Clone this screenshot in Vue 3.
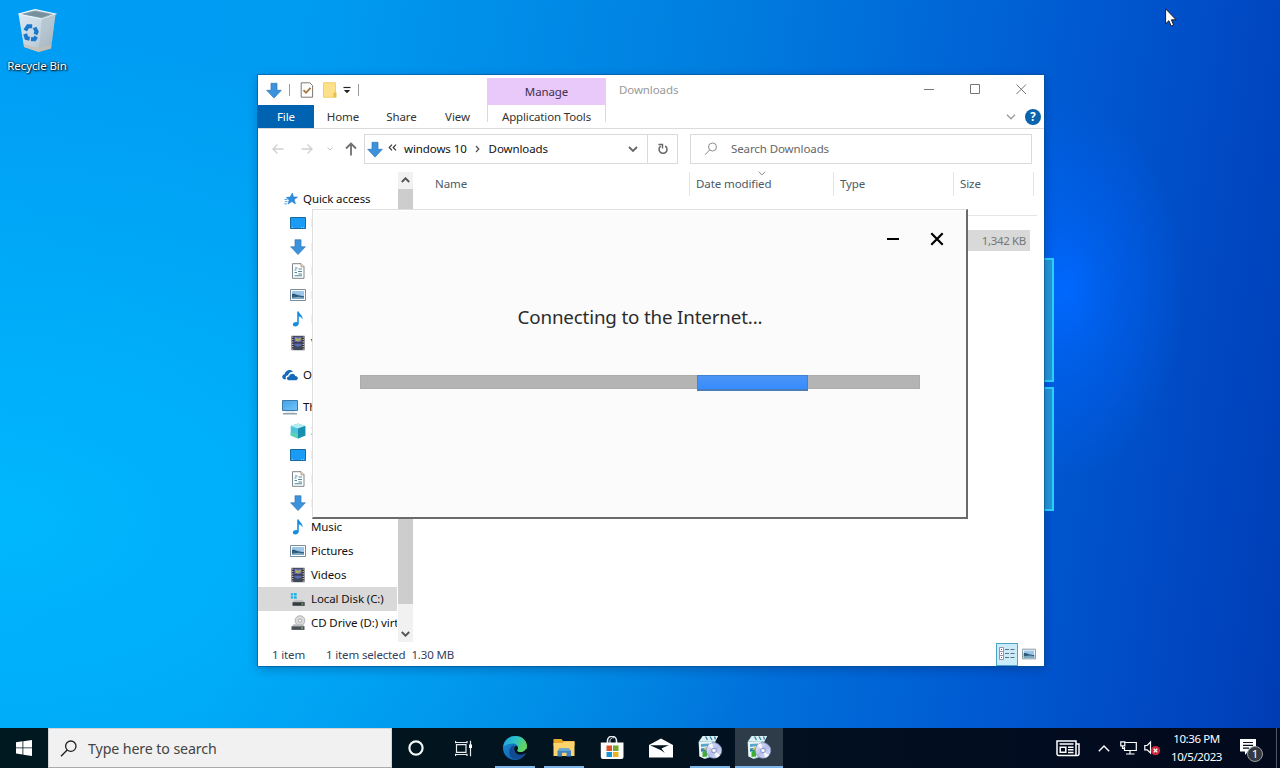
<template>
  <div class="desktop">
    <!-- icon sprites -->
    <svg class="sprites" aria-hidden="true">
      <defs>
        <linearGradient id="gEdge" x1="0" y1="0" x2="1" y2="1">
          <stop offset="0" stop-color="#1b8fd9" />
          <stop offset="1" stop-color="#0c55a8" />
        </linearGradient>
        <linearGradient id="gEdgeTop" x1="0" y1="0" x2="1" y2="0.4">
          <stop offset="0" stop-color="#1ba0e2" />
          <stop offset="0.55" stop-color="#2fc2c6" />
          <stop offset="1" stop-color="#62d65a" />
        </linearGradient>
        <linearGradient id="gBin" x1="0" y1="0" x2="1" y2="1">
          <stop offset="0" stop-color="#dcebf5" />
          <stop offset="0.6" stop-color="#c3d3dd" />
          <stop offset="1" stop-color="#9cabb5" />
        </linearGradient>
        <linearGradient id="gScreen" x1="0" y1="0" x2="1" y2="1">
          <stop offset="0" stop-color="#41a3e8" />
          <stop offset="1" stop-color="#74c3f8" />
        </linearGradient>
        <linearGradient id="gDisc" x1="0" y1="0" x2="1" y2="1">
          <stop offset="0" stop-color="#f4f6ff" />
          <stop offset="0.5" stop-color="#b4bcea" />
          <stop offset="1" stop-color="#e6eafa" />
        </linearGradient>
      </defs>
      <symbol id="i-down" viewBox="0 0 16 16">
        <path d="M5 .8h6v7h4.3L8 15.6.7 7.8H5z" fill="#3c93dc" stroke="#2b75b9" stroke-width=".7" />
      </symbol>
      <symbol id="i-star" viewBox="0 0 16 16">
        <path d="M9.500 1.200l1.300 4.400 4.700.2-3.800 2.900 1.300 4.900L9 10.900l-4.500 2.900 1.500-4.800L2.600 6.200l4.500-.4z" fill="#2e8ede" stroke="#1671c0" stroke-width=".6" />
        <path d="M.5 8.500h3.500M1 11h3M.3 13.500h3" stroke="#4ba4ea" stroke-width="1.100" />
      </symbol>
      <symbol id="i-desktop" viewBox="0 0 16 16">
        <path d="M.5 2.500h15v11H.5z" fill="#1a9bf5" stroke="#17699f" />
        <path d="M2 12.400h1M11 12.400h1M13 12.400h1" stroke="#b8e2fc" stroke-width=".8" />
      </symbol>
      <symbol id="i-doc" viewBox="0 0 16 16">
        <path d="M2.500.7h8.600L14 3.600v11.700H2.500z" fill="#fff" stroke="#7d868c" />
        <path d="M11 .8v3h3" fill="#eee" stroke="#b07f52" stroke-width=".8" />
        <path d="M5 5h2.500M8.500 6h3.500M4.500 7h2M8 8.500h4M4.500 9.500h2.500M8.500 11h3.500M4.500 12.800h7.500" stroke="#4a8c9c" stroke-width="1.100" />
      </symbol>
      <symbol id="i-pic" viewBox="0 0 16 16">
        <path d="M.5 2.500h15v11H.5z" fill="#fff" stroke="#7a8b99" />
        <path d="M2 4h12v8H2z" fill="#9cc6ea" />
        <path d="M2 7c3-.8 5 1.800 12 2.200V12H2z" fill="#315b78" />
        <path d="M2 10.600l7-.8 5 .8V12H2z" fill="#7cabc4" />
      </symbol>
      <symbol id="i-music" viewBox="0 0 16 16">
        <path d="M7.200.5h1.600c.3 2.500 4.500 3.800 3.700 8.300-.4-1.900-1.800-3-3.700-3.300v7.100c0 1.700-1.600 2.900-3.400 2.900-1.500 0-2.600-.8-2.600-2 0-1.600 2.300-2.800 4.400-2.300z" fill="#158fdc" />
      </symbol>
      <symbol id="i-video" viewBox="0 0 16 16">
        <path d="M1.500.8h13v14.400h-13z" fill="#303036" />
        <path d="M4.300 1.500h7.400v5.800H4.300zM4.300 8.500h7.400v6H4.300z" fill="#5a69b5" />
        <path d="M5 2.200l3.400 1.600 2.300-1.600v3L8 6.500l-2.600-1z" fill="#b5a95c" />
        <path d="M4.300 10l3.400 2 4-1.500v4H4.300z" fill="#3b4a52" />
        <path d="M2.800 1.500v13.200M13.200 1.500v13.200" stroke="#e6e6e6" stroke-width="1.100" stroke-dasharray="1.2 1.2" />
      </symbol>
      <symbol id="i-cloud" viewBox="0 0 16 16">
        <path d="M1.800 12.200C-.9 10.700.2 7.600 2.600 7.300 3.300 3.300 8.500 1.400 11 4.800c-3 .1-4.400 1.700-4.900 3.400-2.400.3-3 2.300-2 4z" fill="#1469b9" />
        <path d="M6.400 13.200c-2.300-.6-2-3.700.6-3.800.8-3.600 5.500-3.600 6.200-.5 3.100 0 3.600 3.400 1 4.300z" fill="#1469b9" />
      </symbol>
      <symbol id="i-pc" viewBox="0 0 16 16">
        <path d="M.5 1.500h15v10H.5z" fill="url(#gScreen)" stroke="#3a7baa" />
        <path d="M1 14.800h14" stroke="#75899a" stroke-width="1.200" />
        <path d="M3 13h10" stroke="#d0dbe3" />
      </symbol>
      <symbol id="i-cube" viewBox="0 0 16 16">
        <path d="M8 .6l7.300 2.300v9.500L8 15.600.7 12.400V2.900z" fill="#4fc3dc" />
        <path d="M8 .6l7.300 2.300L8 5.400.7 2.900z" fill="#b5ebf2" />
        <path d="M8 5.400l7.300-2.500v9.500L8 15.600z" fill="#178fae" />
        <path d="M.7 9L8 11v4.600L.7 12.400z" fill="#59d2b8" />
      </symbol>
      <symbol id="i-disk" viewBox="0 0 16 16">
        <path d="M.8 2.200h2.400v2.300H.8zM4 2h2.700v2.500H4zM.8 5.300h2.400v2.300H.8zM4 5.300h2.700v2.500H4z" fill="#1fb1e8" />
        <path d="M4.500 9.300h8.300l1.700 2H2.700z" fill="#b9bdc0" />
        <path d="M2.500 11.200h12.200v3.600H2.500z" fill="#383c40" />
        <path d="M11.500 13h1.800" stroke="#7de07d" />
      </symbol>
      <symbol id="i-cd" viewBox="0 0 16 16">
        <circle cx="10" cy="5.600" r="4.900" fill="#dadada" stroke="#9c9c9c" stroke-width=".7" />
        <circle cx="10" cy="5.600" r="1.600" fill="#fff" stroke="#8c8c8c" stroke-width=".7" />
        <path d="M3.500 9.300h9.600l1.400 2.200H1.800z" fill="#b9bdc0" />
        <path d="M1.500 11.300h13v3.600h-13z" fill="#4b4f53" />
        <path d="M11.200 13h1.800" stroke="#a8d8a8" />
      </symbol>
      <symbol id="i-installer" viewBox="0 0 26 26">
        <path d="M1.500 7l4-6h15.500l-2.500 5v14.500L8 24l-5.500-2.500z" fill="#9fcbd8" />
        <path d="M6 1h15l-2.500 5H2.500z" fill="#dff0f2" />
        <path d="M8.500 1.500l2 3.500M13 1.500l2 3.500M17.500 1.500l1 3" stroke="#3789a8" stroke-width="1.400" />
        <path d="M2 7l13-.5v14L7 23.500l-4.500-2.300z" fill="#eef5f4" />
        <path d="M4 9l8-.6v2.500l-8 1z" fill="#5aa5cc" />
        <path d="M4 13.500l5-.8v3l-5 1z" fill="#2d82b4" />
        <path d="M5.500 16.500l4.500-1.500v6.500l-4.500.6z" fill="#3fae35" />
        <path d="M6 14.600l3-2.500 1.500 3z" fill="#e1ca54" />
        <circle cx="17" cy="15.500" r="7.800" fill="url(#gDisc)" stroke="#777fa9" stroke-width=".7" />
        <path d="M17 15.500L11 10.500a8 8 0 0 1 4-2.300zM17 15.500l6 5a8 8 0 0 1-4 2.300z" fill="#fff" opacity=".8" />
        <circle cx="17" cy="15.500" r="2.300" fill="#f3f3fb" stroke="#757bb0" stroke-width=".8" />
      </symbol>
    </svg>

    <div class="pane pane-top"></div>
    <div class="pane pane-bottom"></div>

    <div class="recycle">
      <svg width="40" height="44" viewBox="0 0 40 44">
        <path d="M1.500 5L18 .6 38.500 5 34 39.500 21.500 43 7 38z" fill="url(#gBin)" />
        <path d="M1.500 5L18 .6 38.500 5 25 10z" fill="#8eabba" stroke="#eff8fc" stroke-width="1.200" />
        <path d="M6 5.200L18 2.300l15.500 3L24 8.500z" fill="#78909c" />
        <path d="M25 10l13.500-5L34 39.500 21.500 43z" fill="#a9bac4" opacity=".55" />
        <path d="M7 35l14.500 4 13-3-.5 3.500L21.500 43 7 38z" fill="#cbbfb1" opacity=".7" />
        <g fill="none" stroke="#1978cc" stroke-width="4">
          <path d="M8.200 21.500l2.800-4.300h4.200" />
          <path d="M17.600 18.500l2 4.200-1.200 2.600" />
          <path d="M8.200 24.800l1.300 4.300 3.200.6M14 30.200h3.600l1.600-2.600" />
        </g>
      </svg>
      <span>Recycle Bin</span>
    </div>

    <!-- explorer window -->
    <div class="explorer">
      <div class="titlebar">
        <div class="quick">
          <svg width="16" height="17"><use href="#i-down" /></svg>
          <i class="sep"></i>
          <svg width="14" height="16" viewBox="0 0 14 16">
            <path d="M1.200.8h8.600L12.600 3.600v11.600H1.200z" fill="#fdfdfd" stroke="#807772" />
            <path d="M3.500 8.200L6 10.800l4.500-5" fill="none" stroke="#a57442" stroke-width="1.800" />
          </svg>
          <svg class="folder" width="14" height="16" viewBox="0 0 14 16">
            <path d="M.5.7h12v14.600H.5z" fill="#fde08a" stroke="#efc85c" stroke-width=".8" />
            <path d="M10.500 10.500h3v4.800h-3z" fill="#e8bf4f" />
          </svg>
          <svg class="more" width="8" height="8" viewBox="0 0 8 8">
            <path d="M.5 1.500h7" stroke="#222" stroke-width="1.200" />
            <path d="M.8 4h6.400L4 7.300z" fill="#222" />
          </svg>
          <i class="sep"></i>
        </div>
        <div class="manage">Manage</div>
        <div class="title">Downloads</div>
        <div class="controls">
          <svg width="11" height="11"><path d="M0 5.500h10" /></svg>
          <svg width="11" height="11"><path d="M.5.5h9v9h-9z" /></svg>
          <svg width="11" height="11"><path d="M.5.5l9.500 9.500M10 .5L.5 10" /></svg>
        </div>
      </div>

      <div class="tabs">
        <div class="tab file">File</div>
        <div class="tab home">Home</div>
        <div class="tab share">Share</div>
        <div class="tab view">View</div>
        <div class="tab tools">Application Tools</div>
        <div class="tabs-right">
          <svg width="10" height="6" viewBox="0 0 10 6"><path d="M1 .8l4 4 4-4" fill="none" stroke="#9a9a9a" stroke-width="1.300" /></svg>
          <span class="help">?</span>
        </div>
      </div>

      <div class="address">
        <div class="nav">
          <svg width="12" height="12" viewBox="0 0 12 12"><path d="M11.500 6H1M5.500 1.500L1 6l4.500 4.500" fill="none" stroke="#cfcfcf" stroke-width="1.300" /></svg>
          <svg width="12" height="12" viewBox="0 0 12 12"><path d="M.5 6H11M6.500 1.500L11 6l-4.500 4.500" fill="none" stroke="#cfcfcf" stroke-width="1.300" /></svg>
          <svg width="6" height="4" viewBox="0 0 6 4"><path d="M.5.5L3 3 5.500.5" fill="none" stroke="#c4c4c4" /></svg>
          <svg width="12" height="14" viewBox="0 0 12 14"><path d="M6 13.500V1.500M1 6.500l5-5 5 5" fill="none" stroke="#6f6f6f" stroke-width="1.800" /></svg>
        </div>
        <div class="path">
          <svg width="16" height="17"><use href="#i-down" /></svg>
          <svg class="chev2" width="9" height="7" viewBox="0 0 9 7"><path d="M4 .6L1.200 3.500 4 6.400M8 .6L5.200 3.500 8 6.400" fill="none" stroke="#333" stroke-width="1.100" /></svg>
          <span class="crumb">windows 10</span>
          <svg class="chev" width="5" height="8" viewBox="0 0 5 8"><path d="M1 1l2.800 3L1 7" fill="none" stroke="#555" stroke-width="1.300" /></svg>
          <span class="crumb">Downloads</span>
          <svg class="drop" width="10" height="7" viewBox="0 0 10 7"><path d="M1 1l4 4 4-4" fill="none" stroke="#666" stroke-width="1.800" /></svg>
        </div>
        <div class="refresh">
          <svg width="12" height="12" viewBox="0 0 12 12">
            <path d="M8.200 3A4 4 0 1 1 3.700 3.100" fill="none" stroke="#666" stroke-width="1.500" />
            <path d="M1.500 1.500h4v4" fill="none" stroke="#666" stroke-width="1.400" />
          </svg>
        </div>
        <div class="search">
          <svg width="14" height="14" viewBox="0 0 14 14"><circle cx="8.500" cy="5" r="4" fill="none" stroke="#8b8b8b" /><path d="M5.600 8L1 12.800" stroke="#8b8b8b" /></svg>
          <span class="crumb">Search Downloads</span>
        </div>
      </div>

      <div class="body">
        <div class="tree">
          <div v-for="(n, i) in nodes" :key="i" class="node" :class="[n.cls, { root: n.root }]">
            <svg width="16" height="16"><use :href="'#i-' + n.icon" /></svg>
            <span>{{ n.label }}</span>
          </div>
        </div>
        <div class="scroll">
          <svg width="9" height="6" viewBox="0 0 9 6"><path d="M.8 5l3.700-3.700L8.200 5" fill="none" stroke="#555" stroke-width="1.900" /></svg>
          <div class="thumb"></div>
          <svg class="sdown" width="9" height="6" viewBox="0 0 9 6"><path d="M.8 1l3.700 3.700L8.200 1" fill="none" stroke="#555" stroke-width="1.900" /></svg>
        </div>
        <div class="list">
          <div class="cols">
            <div class="col name">Name</div>
            <div class="col date">
              Date modified
              <svg class="sort" width="8" height="5" viewBox="0 0 8 5"><path d="M.8.7L4 3.900 7.200.7" fill="none" stroke="#888" /></svg>
            </div>
            <div class="col type">Type</div>
            <div class="col size">Size</div>
          </div>
          <div class="row">1,342 KB</div>
        </div>
      </div>

      <div class="status">
        <span>1 item</span>
        <span class="sel">1 item selected</span>
        <span>1.30 MB</span>
        <div class="modes">
          <div class="mode on">
            <svg width="18" height="16" viewBox="0 0 18 16">
              <path d="M1.500 1.500h4v4h-4zM1.500 5.500h4v4h-4zM1.500 9.500h4v4h-4z" fill="#fff" stroke="#a090a8" />
              <path d="M3 3.500h1M3 7.500h1M3 11.500h1" stroke="#2d72ad" stroke-width="1.200" />
              <path d="M7 3.500h4M12.500 3.500h4M7 7.500h4M12.500 7.500h4M7 11.500h4M12.500 11.500h4" stroke="#62727d" />
            </svg>
          </div>
          <svg width="14" height="14"><use href="#i-pic" /></svg>
        </div>
      </div>
    </div>

    <!-- installer dialog -->
    <div class="dialog">
      <div class="dialog-bar">
        <svg width="12" height="12"><path d="M0 6h12" stroke="#000" stroke-width="2" /></svg>
        <svg width="14" height="14" viewBox="0 0 14 14"><path d="M1.300 1.300l11.400 11.400M12.700 1.300L1.300 12.700" stroke="#000" stroke-width="2.200" /></svg>
      </div>
      <p class="msg">Connecting to the Internet...</p>
      <div class="track"><div class="chunk" :style="{ marginLeft: progress.start + '%', width: progress.size + '%' }"></div></div>
    </div>

    <!-- taskbar -->
    <div class="taskbar">
      <div class="start">
        <svg width="16" height="16" viewBox="0 0 16 16" fill="#fff"><path d="M0 2.200l6.500-.9v6.200H0zM7.300 1.200L16 0v7.500H7.300zM0 8.300h6.500v6.200L0 13.600zM7.300 8.300H16V16l-8.700-1.300z" /></svg>
      </div>
      <div class="tsearch">
        <svg width="17" height="17" viewBox="0 0 17 17"><circle cx="10.800" cy="6.200" r="5.200" fill="none" stroke="#222" stroke-width="1.300" /><path d="M7.200 10L1 16.200" stroke="#222" stroke-width="1.400" /></svg>
        <span>Type here to search</span>
      </div>
      <div class="app cortana">
        <svg width="16" height="16" viewBox="0 0 16 16"><circle cx="8" cy="8" r="6.600" fill="none" stroke="#f3f6f7" stroke-width="2.200" /></svg>
      </div>
      <div class="app taskview">
        <svg width="17" height="17" viewBox="0 0 17 17" fill="none" stroke="#e8ecee" stroke-width="1.200">
          <path d="M1.500 4.600h9.500v7.800H1.500zM.6 3.200V1M.6 2.500H12M12 3.200V1M.6 16v-2.200M.6 14.500H12M12 16v-2.200M15.500.8v15.400" />
          <path d="M14 4.500h3v3.500h-3z" fill="#fff" stroke="none" />
        </svg>
      </div>
      <div class="app edge running">
        <svg width="24" height="24" viewBox="0 0 24 24">
          <circle cx="12" cy="12" r="12" fill="url(#gEdge)" />
          <path d="M.2 10.500C1.500 3.500 7 0 12.500 0 19.500 0 24 5 24 10.200c0 3.400-2.600 5.900-6.200 5.900-3.300 0-4.200-1.300-3.300-2.600 1.600-2.400-.4-6.100-4.700-6.100-3.800 0-7.200 1.700-9.600 3.100z" fill="url(#gEdgeTop)" />
          <path d="M8.200 21.500c-3.600-4.700-2-10.700 3-12.800-1.900 5.200 1.100 10.100 6.100 10.200 2 0 3.500-.6 5-1.400-2.900 5.200-9.200 7.200-14.100 4z" fill="#134b93" />
          <path d="M11.400 11c-1.100 3.900 1.600 7.600 6 7.800 2 0 3.700-.7 5-1.500.9-.6 1.500.2 1 .9-.4.6-.9 1.200-1.400 1.800L25 21v-7.500l-2-.6c-1.200 2-3 3.200-5.200 3.200-3.300 0-4.200-1.300-3.300-2.600.7-1.100.5-3.200-1-3.500-1-.2-1.800.4-2.100 1z" fill="#04121c" />
        </svg>
      </div>
      <div class="app files running">
        <svg width="22" height="20" viewBox="0 0 22 20">
          <path d="M.5 1h8l1.500 2h11.500v5H.5z" fill="#e5a829" />
          <path d="M.5 5h9l1.500-1.500h10.500V18H.5z" fill="#fcd36c" />
          <path d="M4.500 18.500V13l2-2.500h9.500l2 2.500v5.500h-4.500v-3.700h-4.500v3.700z" fill="#4384be" />
          <path d="M6.500 10.500H16l2 2.500H4.500z" fill="#66a7d9" />
        </svg>
      </div>
      <div class="app store">
        <svg width="24" height="25" viewBox="0 0 24 25">
          <path d="M7.500 7V4.800a4.500 4.500 0 0 1 9 0V7" fill="none" stroke="#e9eef1" stroke-width="1.600" />
          <path d="M10 7V4.500a3.200 3.200 0 0 1 4-2.700" fill="none" stroke="#e9eef1" />
          <path d="M.8 6.500h22.700V21a2 2 0 0 1-2 2H2.800a2 2 0 0 1-2-2z" fill="#fcfcfc" />
          <path d="M6.500 9.500H12V15H6.500z" fill="#dc5126" /><path d="M13 9.500h5.500V15H13z" fill="#74a92c" />
          <path d="M6.500 16H12v5H6.500z" fill="#1695d1" /><path d="M13 16h5.500v5H13z" fill="#ecb321" />
        </svg>
      </div>
      <div class="app mail">
        <svg width="24" height="20" viewBox="0 0 24 20"><path d="M0 7L12 .5 24 7v12.500H0z" fill="#fff" /><path d="M1 7.200h19L12.600 10.500l3.200 4.600L12 12.300z" fill="#04141e" /><path d="M12.600 10.500l8-3.300-6.300 4.800z" fill="#fff" /></svg>
      </div>
      <div class="app setup running"><svg width="26" height="26"><use href="#i-installer" /></svg></div>
      <div class="app setup2 running active"><svg width="26" height="26"><use href="#i-installer" /></svg></div>

      <div class="tray">
        <svg class="news" width="24" height="17" viewBox="0 0 24 17" fill="none" stroke="#fff" stroke-width="1.500">
          <path d="M1 1h19v14.500H2.500A1.500 1.500 0 0 1 1 14zM20 4h3v10a1.500 1.500 0 0 1-1.500 1.500H19M3.500 4h14M4.200 7.200h5.600v5H4.200zM12 7.200h5.500M12 9.800h5.500M12 12.400h5.500" />
        </svg>
        <svg class="up" width="12" height="7" viewBox="0 0 12 7"><path d="M.8 6.200L6 1l5.200 5.200" fill="none" stroke="#fff" stroke-width="1.400" /></svg>
        <svg class="net" width="17" height="14" viewBox="0 0 17 14" fill="none" stroke="#fff" stroke-width="1.200">
          <path d="M5.500 1.500h10.800v8H4.500V6M10 9.500v3.500M6 13h8.500M.8.8h4v4h-4zM2.500 4.800v2.500h2" />
        </svg>
        <svg class="vol" width="17" height="16" viewBox="0 0 17 16">
          <path d="M.8 5.500h2.400L6.500 2v11L3.200 9.800H.8z" fill="none" stroke="#fff" stroke-width="1.200" />
          <circle cx="11.500" cy="10.600" r="4.700" fill="#c9283c" />
          <path d="M9.700 8.800l3.600 3.600M13.300 8.800l-3.600 3.600" stroke="#fff" stroke-width="1.300" />
        </svg>
        <div class="clock"><span>10:36 PM</span><span>10/5/2023</span></div>
        <div class="notify">
          <svg width="16" height="16" viewBox="0 0 16 16"><path d="M0 0h16v12.500H8L5 16v-3.500H0z" fill="#fff" /><path d="M3 3.500h10M3 6.300h10M3 9.100h6" stroke="#04101c" stroke-width="1.200" /></svg>
          <span class="badge">1</span>
        </div>
        <i class="peek"></i>
      </div>
    </div>

    <svg class="cursor" width="12" height="19" viewBox="0 0 12 19">
      <path d="M.6.800v15l3.300-3.100L6.100 18l2.500-1-2.200-5.200h4.700z" fill="#fff" stroke="#111" stroke-width=".9" />
    </svg>
  </div>
</template>

<script setup>
const progress = { start: 60.2, size: 19.8 }

const nodes = [
  { icon: 'star', label: 'Quick access', root: true, cls: 'qa' },
  { icon: 'desktop', label: 'Desktop' },
  { icon: 'down', label: 'Downloads' },
  { icon: 'doc', label: 'Documents' },
  { icon: 'pic', label: 'Pictures' },
  { icon: 'music', label: 'Music' },
  { icon: 'video', label: 'Videos' },
  { icon: 'cloud', label: 'OneDrive', root: true, cls: 'gap' },
  { icon: 'pc', label: 'This PC', root: true, cls: 'gap' },
  { icon: 'cube', label: '3D Objects' },
  { icon: 'desktop', label: 'Desktop' },
  { icon: 'doc', label: 'Documents' },
  { icon: 'down', label: 'Downloads' },
  { icon: 'music', label: 'Music' },
  { icon: 'pic', label: 'Pictures' },
  { icon: 'video', label: 'Videos' },
  { icon: 'disk', label: 'Local Disk (C:)', cls: 'current' },
  { icon: 'cd', label: 'CD Drive (D:) virt' }
]
</script>

<style>
body {
  overflow: hidden;
}
</style>

<style scoped>
.desktop {
  position: relative;
  width: 1280px;
  height: 768px;
  overflow: hidden;
  box-sizing: border-box;
  font-family: "Noto Sans", "Open Sans", sans-serif;
  font-size: 11.5px;
  letter-spacing: -0.1px;
  color: #222;
  background:
    radial-gradient(ellipse 120px 190px at 1065px 290px, #0068ff 0%, rgba(0, 100, 248, 0.6) 35%, rgba(0, 92, 230, 0) 100%),
    radial-gradient(ellipse 800px 480px at 0 520px, rgba(0, 190, 255, 0.8), rgba(0, 180, 255, 0) 100%),
    linear-gradient(98deg, #009df5 0%, #009cf2 22%, #007edf 52%, #005ad2 78%, #0048c2 91%, #003cb4 100%);
}

.desktop *,
.desktop *::before {
  box-sizing: border-box;
}

svg {
  display: block;
  flex-shrink: 0;
}

.sprites {
  position: absolute;
  width: 0;
  height: 0;
}

/* wallpaper window panes */
.pane {
  position: absolute;
  left: 1000px;
  width: 54px;
  background: #2496d8;
  border: 2px solid #28d2fb;
}

.pane-top {
  top: 258px;
  height: 124px;
}

.pane-bottom {
  top: 387px;
  height: 124px;
}

.recycle {
  position: absolute;
  left: 0;
  top: 9px;
  width: 74px;
  display: flex;
  flex-direction: column;
  align-items: center;
  gap: 5px;
  color: #fff;
  line-height: 16px;
  text-shadow: 1px 1px 2px #000, 0 0 2px #000;
}

.explorer {
  position: absolute;
  left: 258px;
  top: 75px;
  width: 786px;
  height: 591px;
  display: flex;
  flex-direction: column;
  background: #fff;
  box-shadow: 0 0 0 1px rgba(0, 78, 140, 0.55), 0 3px 10px rgba(0, 20, 70, 0.3);
}

.titlebar {
  display: flex;
  height: 30px;
}

.quick {
  display: flex;
  align-items: center;
  width: 229px;
  padding-left: 8px;
}

.sep {
  width: 1px;
  height: 12px;
  margin: 0 10px 0 7px;
  background: #999;
}

.folder {
  margin-left: 9px;
}

.more {
  margin: 0 0 0 6px;
}

.manage {
  width: 119px;
  margin-top: 3px;
  background: #e9c8fa;
  color: #40304a;
  text-align: center;
  line-height: 28px;
}

.title {
  flex: 1;
  padding-left: 13px;
  color: #999;
  line-height: 30px;
}

.controls {
  display: flex;
  align-items: center;
  gap: 35px;
  padding: 0 17px 1px 0;
  fill: none;
  stroke: #777;
}

.tabs {
  display: flex;
  height: 24px;
  border-bottom: 1px solid #dadbdc;
  line-height: 24px;
  text-align: center;
  color: #333;
}

.file {
  width: 56px;
  background: #0063b1;
  color: #fff;
}

.home {
  width: 58px;
}

.share {
  width: 59px;
}

.view {
  width: 53px;
  margin-right: 3px;
}

.tools {
  width: 119px;
  height: 17px;
  border: solid #dcd6df;
  border-width: 0 1px;
  letter-spacing: -0.15px;
}

.tabs-right {
  display: flex;
  align-items: center;
  gap: 9px;
  margin-left: auto;
  padding-right: 3px;
}

.help {
  width: 16px;
  height: 16px;
  border-radius: 50%;
  background: #0a64ad;
  color: #fff;
  font-weight: 700;
  line-height: 16px;
}

.address {
  display: flex;
  align-items: center;
  height: 41px;
  padding-bottom: 1px;
}

.nav {
  display: flex;
  align-items: center;
  width: 106px;
  padding-left: 14px;
}

.nav svg:nth-child(2) {
  margin: 0 14px 0 17px;
}

.nav svg:nth-child(4) {
  margin-left: 12px;
}

.path,
.refresh,
.search {
  display: flex;
  align-items: center;
  height: 30px;
  border: 1px solid #d9d9d9;
}

.path {
  width: 284px;
  padding: 0 9px 0 2px;
  color: #111;
}

.crumb {
  padding-bottom: 2px;
}

.chev2 {
  margin: 0 7px 3px 5px;
}

.chev {
  margin: 0 9px 0 8px;
}

.drop {
  margin-left: auto;
}

.refresh {
  width: 30px;
  border-left: 0;
  justify-content: center;
}

.search {
  width: 342px;
  margin-left: 12px;
  padding-left: 13px;
  gap: 13px;
  color: #666;
}

.body {
  display: flex;
  height: 472px;
}

.tree {
  width: 139px;
  padding-top: 17px;
  overflow: hidden;
  color: #111;
}

.node {
  display: flex;
  align-items: center;
  height: 24px;
  gap: 5px;
  padding-left: 32px;
  white-space: nowrap;
}

.node span {
  padding-bottom: 2px;
}

.root {
  padding-left: 24px;
}

.qa svg {
  width: 14px;
  margin-left: 2px;
}

.gap {
  margin-top: 8px;
}

.current {
  background: #d9d9d9;
}

.scroll {
  display: flex;
  flex-direction: column;
  align-items: center;
  width: 15px;
  margin: 2px 0 0 1px;
  padding: 5px 0;
  background: #f1f1f1;
}

.thumb {
  width: 15px;
  height: 415px;
  margin-top: 6px;
  background: #cdcdcd;
}

.sdown {
  margin-top: auto;
}

.list {
  flex: 1;
  margin-right: 7px;
  color: #4c5a68;
}

.cols {
  display: flex;
  height: 46px;
  border-bottom: 1px solid #e5e5e5;
}

.col {
  position: relative;
  height: 24px;
  margin-top: 2px;
  border-right: 1px solid #e5e5e5;
  line-height: 24px;
}

.name {
  width: 277px;
  padding-left: 22px;
}

.date {
  width: 144px;
  padding-left: 6px;
}

.type {
  width: 120px;
  padding-left: 6px;
}

.size {
  width: 80px;
  padding-left: 6px;
}

.sort {
  position: absolute;
  left: 68px;
  top: -1px;
}

.row {
  height: 21px;
  margin: 14px 7px 0 22px;
  padding-right: 4px;
  background: #d9d9d9;
  color: #777;
  text-align: right;
  letter-spacing: -0.35px;
  line-height: 21px;
}

.status {
  display: flex;
  align-items: center;
  height: 24px;
  padding-left: 14px;
  color: #33415c;
  letter-spacing: -0.15px;
}

.sel {
  margin: 0 6px 0 21px;
}

.modes {
  display: flex;
  align-items: center;
  gap: 4px;
  margin-left: auto;
  padding-right: 8px;
}

.mode {
  display: flex;
  align-items: center;
  justify-content: center;
  width: 22px;
  height: 23px;
  border: 1px solid #4fa3c7;
  background: #c9ebfa;
}

.dialog {
  position: absolute;
  left: 312px;
  top: 209px;
  width: 656px;
  height: 310px;
  background: #fbfbfb;
  border: solid;
  border-width: 1px 2px 2px 1px;
  border-color: #dedede #6a6a6a #6a6a6a #dedede;
  box-shadow: inset 1px 1px 0 #fff;
}

.dialog-bar {
  display: flex;
  align-items: center;
  justify-content: flex-end;
  gap: 31px;
  height: 58px;
  padding-right: 22px;
}

.msg {
  margin: 35px 0 0 1px;
  color: #2b2b2b;
  font-size: 18.8px;
  letter-spacing: -0.17px;
  line-height: 28px;
  text-align: center;
}

.track {
  width: 560px;
  height: 14px;
  margin: 44px 0 0 47px;
  background: #b4b4b4;
  box-shadow: inset 0 0 0 1px #acacac;
}

.chunk {
  height: 16px;
  background: linear-gradient(#4b94f5, #378cff);
  border: 1px solid #4182d4;
  border-bottom: 2px solid #4a7db8;
}

.taskbar {
  position: absolute;
  left: 0;
  top: 728px;
  width: 1280px;
  height: 40px;
  display: flex;
  background: linear-gradient(90deg, #001820, #02141f 45%, #020c20 80%, #020a1c);
  color: #fff;
}

.start {
  display: flex;
  align-items: center;
  justify-content: center;
  width: 48px;
}

.tsearch {
  display: flex;
  align-items: center;
  width: 344px;
  gap: 11px;
  padding-left: 11px;
  background: #f1f1f1;
  border: 1px solid #d0d4d6;
  border-bottom-color: #aaa;
  color: #444;
  font-size: 14.2px;
}

.app {
  position: relative;
  display: flex;
  align-items: center;
  justify-content: center;
  width: 48px;
}

.taskview {
  width: 47px;
}

.edge,
.files,
.store,
.mail,
.setup {
  width: 49px;
}

.edge {
  margin-left: 3px;
}

.store {
  width: 48px;
}

.setup2 {
  margin-left: 1px;
}

.running::before {
  content: "";
  position: absolute;
  bottom: 0;
  width: 40px;
  height: 2px;
  background: #7cb6eb;
}

.active {
  background: #2d3c48;
}

.active::before {
  width: 48px;
}

.tray {
  display: flex;
  align-items: center;
  margin-left: auto;
}

.up {
  margin: 0 10px 0 18px;
}

.vol {
  margin: 0 8px 0 7px;
}

.clock {
  display: flex;
  flex-direction: column;
  width: 55px;
  text-align: center;
  line-height: 18px;
  letter-spacing: -0.4px;
}

.notify {
  position: relative;
  margin: 0 20px 2px 16px;
}

.badge {
  position: absolute;
  left: 7px;
  top: 7px;
  width: 16px;
  height: 16px;
  border: 1px solid #9b9ea2;
  border-radius: 50%;
  background: #34383f;
  line-height: 14px;
  text-align: center;
}

.peek {
  width: 1px;
  height: 40px;
  margin-right: 3px;
  background: #4d5663;
}

.cursor {
  position: absolute;
  left: 1165px;
  top: 8px;
}
</style>
